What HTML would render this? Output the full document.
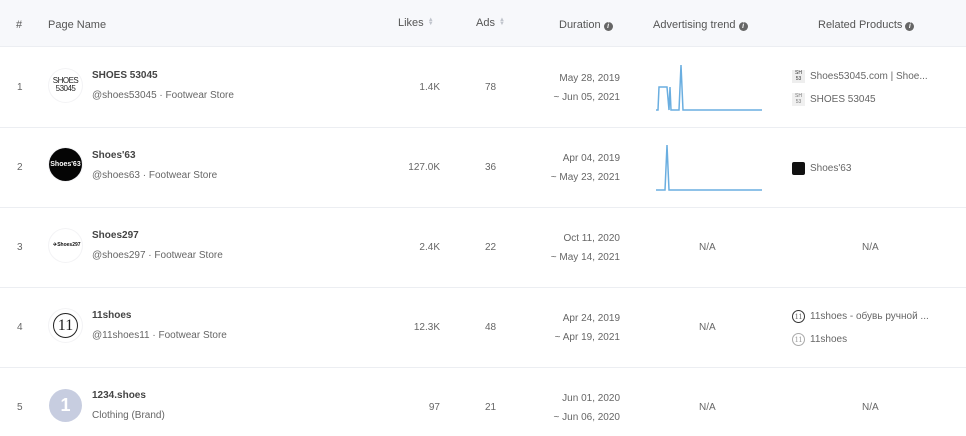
<!DOCTYPE html><html><head><style>
*{margin:0;padding:0;box-sizing:border-box}
body{width:966px;height:436px;overflow:hidden;background:#fff;font-family:"Liberation Sans",Arial,sans-serif;font-size:10px;color:#666;position:relative}
.hd{position:absolute;left:0;top:0;width:966px;height:47px;background:#f7f8fb;border-bottom:1px solid #eceef2}
.h{position:absolute;top:19px;font-size:11px;color:#555}
.i{display:inline-block;width:9px;height:9px;border-radius:50%;background:#666;color:#fff;font-size:7px;line-height:9px;text-align:center;font-weight:bold;vertical-align:0px;margin-left:3px;font-style:italic}
.s{display:inline-block;width:6px;vertical-align:1px;margin-left:4px;color:#c0c4cc;font-size:6px;line-height:4px}
.r{position:absolute;left:0;width:966px;height:80px;border-bottom:1px solid #eceef2}
.a{position:absolute;font-size:10px;color:#666}
.av{position:absolute;left:49px;width:33px;height:33px;border-radius:50%;background:#fff;box-shadow:0 0 0 1px #f3f3f5}
.nm{position:absolute;left:92px;font-weight:bold;font-size:10px;color:#444}
.rt{text-align:right}
.pi{position:absolute;left:792px;width:13px;height:13px}
</style></head><body>
<div class="hd">
<div class="h" style="left:16px">#</div>
<div class="h" style="left:48px">Page Name</div>
<div class="h" style="left:398px;top:17px">Likes<span class="s">▲<br>▼</span></div>
<div class="h" style="left:476px;top:17px">Ads<span class="s">▲<br>▼</span></div>
<div class="h" style="left:559px">Duration<span class="i">i</span></div>
<div class="h" style="left:653px">Advertising trend<span class="i">i</span></div>
<div class="h" style="left:818px">Related Products<span class="i">i</span></div>
</div>

<div class="r" style="top:47px;height:81px"></div>
<div class="r" style="top:128px"></div>
<div class="r" style="top:208px"></div>
<div class="r" style="top:288px"></div>

<!-- row 1 -->
<div class="a" style="left:17px;top:82px">1</div>
<div class="av" style="top:69px;font-size:8px;line-height:8px;text-align:center;padding-top:8px;color:#222;letter-spacing:-0.5px">SHOES<br>53045</div>
<div class="nm" style="top:70px">SHOES 53045</div>
<div class="a" style="left:92px;top:90px">@shoes53045 · Footwear Store</div>
<div class="a rt" style="left:380px;width:60px;top:82px">1.4K</div>
<div class="a" style="left:485px;top:82px">78</div>
<div class="a rt" style="left:520px;width:100px;top:73px">May 28, 2019</div>
<div class="a rt" style="left:520px;width:100px;top:92px">~ Jun 05, 2021</div>
<svg style="position:absolute;left:655px;top:60px" width="110" height="55"><path d="M1 50 L3 50 L4 27 L12 27 L14 50 L15 27 L16 50 L24 50 L26 5 L28 50 L107 50" fill="none" stroke="#6aaee0" stroke-width="1.5"/></svg>
<div class="pi" style="top:70px;background:#eee;font-size:5px;line-height:6px;color:#333;text-align:center">SH<br>53</div>
<div class="a" style="left:810px;top:71px">Shoes53045.com | Shoe...</div>
<div class="pi" style="top:93px;background:#f0f0f0;font-size:5px;line-height:6px;color:#777;text-align:center">SH<br>53</div>
<div class="a" style="left:810px;top:94px">SHOES 53045</div>

<!-- row 2 -->
<div class="a" style="left:17px;top:162px">2</div>
<div class="av" style="top:148px;background:#050505;color:#fff;font-size:7px;text-align:center;line-height:33px;font-weight:bold">Shoes'63</div>
<div class="nm" style="top:150px">Shoes'63</div>
<div class="a" style="left:92px;top:170px">@shoes63 · Footwear Store</div>
<div class="a rt" style="left:380px;width:60px;top:162px">127.0K</div>
<div class="a" style="left:485px;top:162px">36</div>
<div class="a rt" style="left:520px;width:100px;top:153px">Apr 04, 2019</div>
<div class="a rt" style="left:520px;width:100px;top:172px">~ May 23, 2021</div>
<svg style="position:absolute;left:655px;top:140px" width="110" height="55"><path d="M1 50 L10 50 L12 5 L14 50 L107 50" fill="none" stroke="#6aaee0" stroke-width="1.5"/></svg>
<div class="pi" style="top:162px;background:#111;border-radius:2px"></div>
<div class="a" style="left:810px;top:163px">Shoes'63</div>

<!-- row 3 -->
<div class="a" style="left:17px;top:242px">3</div>
<div class="av" style="top:229px;font-size:5px;color:#111;padding:13px 0 0 4px;font-weight:bold">✈Shoes297</div>
<div class="nm" style="top:230px">Shoes297</div>
<div class="a" style="left:92px;top:250px">@shoes297 · Footwear Store</div>
<div class="a rt" style="left:380px;width:60px;top:242px">2.4K</div>
<div class="a" style="left:485px;top:242px">22</div>
<div class="a rt" style="left:520px;width:100px;top:233px">Oct 11, 2020</div>
<div class="a rt" style="left:520px;width:100px;top:252px">~ May 14, 2021</div>
<div class="a" style="left:699px;top:242px">N/A</div>
<div class="a" style="left:862px;top:242px">N/A</div>

<!-- row 4 -->
<div class="a" style="left:17px;top:322px">4</div>
<div class="av" style="top:309px"><div style="position:absolute;left:4px;top:4px;width:25px;height:25px;border:1px solid #222;border-radius:50%;font-family:'Liberation Serif',serif;font-size:16px;line-height:23px;text-align:center;color:#222">11</div></div>
<div class="nm" style="top:310px">11shoes</div>
<div class="a" style="left:92px;top:330px">@11shoes11 · Footwear Store</div>
<div class="a rt" style="left:380px;width:60px;top:322px">12.3K</div>
<div class="a" style="left:485px;top:322px">48</div>
<div class="a rt" style="left:520px;width:100px;top:313px">Apr 24, 2019</div>
<div class="a rt" style="left:520px;width:100px;top:332px">~ Apr 19, 2021</div>
<div class="a" style="left:699px;top:322px">N/A</div>
<div class="pi" style="top:310px;border:1px solid #333;border-radius:50%;font-size:8px;line-height:11px;text-align:center;font-family:'Liberation Serif',serif">11</div>
<div class="a" style="left:810px;top:311px">11shoes - обувь ручной ...</div>
<div class="pi" style="top:333px;border:1px solid #aaa;border-radius:50%;font-size:8px;line-height:11px;text-align:center;color:#999;font-family:'Liberation Serif',serif">11</div>
<div class="a" style="left:810px;top:334px">11shoes</div>

<!-- row 5 -->
<div class="a" style="left:17px;top:402px">5</div>
<div class="av" style="top:389px;background:#c7cde0;box-shadow:none;color:#fff;font-size:18px;text-align:center;line-height:33px;font-weight:bold">1</div>
<div class="nm" style="top:390px">1234.shoes</div>
<div class="a" style="left:92px;top:410px">Clothing (Brand)</div>
<div class="a rt" style="left:380px;width:60px;top:402px">97</div>
<div class="a" style="left:485px;top:402px">21</div>
<div class="a rt" style="left:520px;width:100px;top:393px">Jun 01, 2020</div>
<div class="a rt" style="left:520px;width:100px;top:412px">~ Jun 06, 2020</div>
<div class="a" style="left:699px;top:402px">N/A</div>
<div class="a" style="left:862px;top:402px">N/A</div>
</body></html>
